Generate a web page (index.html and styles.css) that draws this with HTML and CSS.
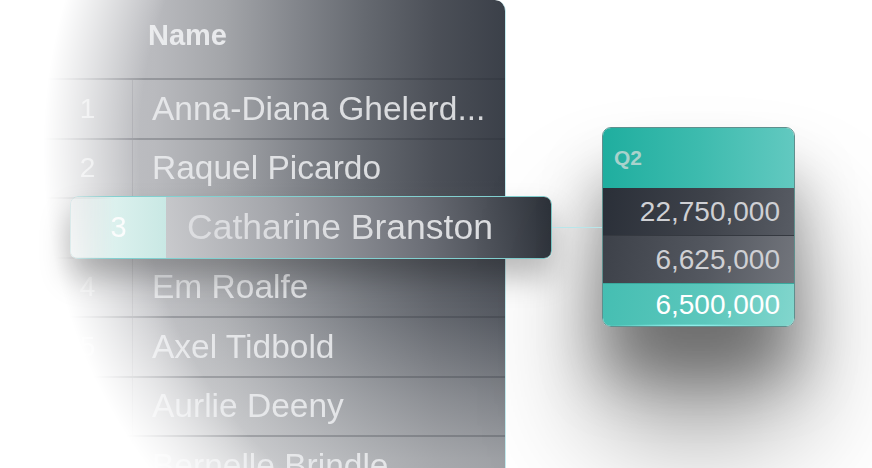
FILE: index.html
```html
<!DOCTYPE html>
<html lang="en">
<head>
<meta charset="utf-8">
<title>Grid drag preview</title>
<link rel="stylesheet" href="styles.css">
</head>
<body>
<main class="stage">
  <section class="sheet">
    <div class="sheet-head">
      <div class="cell num"></div>
      <div class="cell name head-name">Name</div>
    </div>
    <div class="row"><div class="cell num">1</div><div class="cell name">Anna-Diana Ghelerd...</div></div>
    <div class="row"><div class="cell num">2</div><div class="cell name">Raquel Picardo</div></div>
    <div class="row row-empty"><div class="cell num"></div><div class="cell name"></div></div>
    <div class="row"><div class="cell num">4</div><div class="cell name">Em Roalfe</div></div>
    <div class="row"><div class="cell num">5</div><div class="cell name">Axel Tidbold</div></div>
    <div class="row"><div class="cell num">6</div><div class="cell name">Aurlie Deeny</div></div>
    <div class="row"><div class="cell num">7</div><div class="cell name">Bernelle Brindle</div></div>
  </section>

  <div class="ghost">
    <div class="ghost-inner">
      <div class="ghost-num">3</div>
      <div class="ghost-name">Catharine Branston</div>
    </div>
  </div>

  <div class="link"></div>

  <div class="q-card">
    <div class="q-head">Q2</div>
    <div class="q-row q-row-a">22,750,000</div>
    <div class="q-row q-row-b">6,625,000</div>
    <div class="q-row is-active">6,500,000</div>
  </div>
</main>
</body>
</html>
```

FILE: styles.css
```css
* { box-sizing: border-box; margin: 0; padding: 0; }

html, body {
  width: 872px;
  height: 468px;
  overflow: hidden;
  background: #ffffff;
}

body {
  font-family: "Liberation Sans", Arial, sans-serif;
}

.stage {
  position: relative;
  width: 872px;
  height: 468px;
  overflow: hidden;
}

/* main sheet */
.sheet {
  margin-left: 43px;
  width: 463px;
  height: 540px;
  border-radius: 0 11px 0 0;
  border-right: 1px solid #c3eaee;
  background:
    linear-gradient(180deg, rgba(255,255,255,0) 33%, rgba(255,255,255,0.14) 59%, rgba(255,255,255,0.36) 74%, rgba(255,255,255,0.5) 85%, rgba(255,255,255,0.58) 100%),
    linear-gradient(270deg, #3b4049 0px, #4c5058 70px, #656970 140px, #83868c 210px, #a3a5a9 280px, #b9babe 350px, #c6c7ca 463px);
  -webkit-mask-image: radial-gradient(ellipse 480px 508px at 480px 150px, #000 80%, rgba(0,0,0,0.45) 91%, transparent 100%);
  mask-image: radial-gradient(ellipse 480px 508px at 480px 150px, #000 80%, rgba(0,0,0,0.45) 91%, transparent 100%);
}

.sheet-head,
.row {
  display: grid;
  grid-template-columns: 90px 1fr;
}

.sheet-head {
  height: 78px;
}

.row {
  height: 59.5px;
  border-top: 2px solid rgba(38, 42, 50, 0.24);
}

.num {
  display: flex;
  align-items: center;
  justify-content: center;
  color: rgba(242, 243, 245, 0.7);
  font-size: 28px;
}

.row .num {
  border-right: 1px solid rgba(38, 42, 50, 0.1);
}

.name {
  display: flex;
  align-items: center;
  padding-left: 19px;
  color: rgba(236, 237, 239, 0.88);
  font-size: 33.5px;
  white-space: nowrap;
  overflow: hidden;
}

.head-name {
  align-items: flex-start;
  padding-top: 19px;
  padding-left: 15px;
  font-size: 29px;
  font-weight: 700;
  color: rgba(238, 239, 241, 0.92);
}

/* dragged row ghost */
.ghost {
  position: absolute;
  left: 70px;
  top: 196px;
  width: 482px;
  height: 63px;
  border-radius: 8px;
  box-shadow: 0 18px 30px rgba(0, 0, 0, 0.26);
}

.ghost-inner {
  display: grid;
  grid-template-columns: 95px 1fr;
  height: 100%;
  border: 1px solid #82d0d0;
  border-radius: 8px;
  overflow: hidden;
  -webkit-mask-image: linear-gradient(90deg, rgba(0,0,0,0.2) 0, #000 45px);
  mask-image: linear-gradient(90deg, rgba(0,0,0,0.2) 0, #000 45px);
}

.ghost-num {
  display: flex;
  align-items: center;
  justify-content: center;
  background: linear-gradient(90deg, #f0f9f8 0%, #dcf1ee 45%, #c9e8e4 100%);
  color: #fbfcfc;
  font-size: 29px;
}

.ghost-name {
  display: flex;
  align-items: center;
  padding-left: 21px;
  background: linear-gradient(80deg, #c9cacd 0%, #a3a5aa 30%, #6d7078 65%, #2e333b 100%);
  color: #dcdde0;
  font-size: 35.5px;
  white-space: nowrap;
}

.link {
  position: absolute;
  left: 552px;
  top: 227px;
  width: 50px;
  height: 1px;
  background: #b8e6ea;
  z-index: 2;
}

/* Q2 card */
.q-card {
  position: absolute;
  left: 602px;
  top: 127px;
  width: 193px;
  height: 200px;
  display: grid;
  grid-template-rows: 60px 47px 48px 1fr;
  border: 1px solid #5f8f8d;
  border-radius: 9px;
  overflow: hidden;
  box-shadow:
    0 50px 60px rgba(0, 0, 0, 0.35),
    0 100px 120px rgba(0, 0, 0, 0.4);
}

.q-head {
  display: flex;
  align-items: center;
  padding-left: 11px;
  background: linear-gradient(90deg, #1fae9f 0%, #3dbbae 50%, #62c9c0 100%);
  color: #a9d2cc;
  font-size: 21px;
  font-weight: 700;
}

.q-row {
  display: flex;
  align-items: center;
  justify-content: flex-end;
  padding-right: 14px;
  font-size: 28px;
  color: #cfd0d4;
}

.q-row-a {
  background: linear-gradient(100deg, #2a2f38 0%, #3f434b 55%, #585c64 100%);
}

.q-row-b {
  border-top: 1px solid #353940;
  background: linear-gradient(100deg, #3d4149 0%, #545860 55%, #72757c 100%);
}

.is-active {
  border-top: 1px solid #3aa99d;
  background:
    radial-gradient(ellipse 45% 2px at 45% 100%, rgba(170, 255, 255, 0.9) 0, rgba(170, 255, 255, 0) 100%),
    linear-gradient(100deg, #45beb2 0%, #5cc7bc 55%, #82d6cd 100%);
  color: #ffffff;
}
```
